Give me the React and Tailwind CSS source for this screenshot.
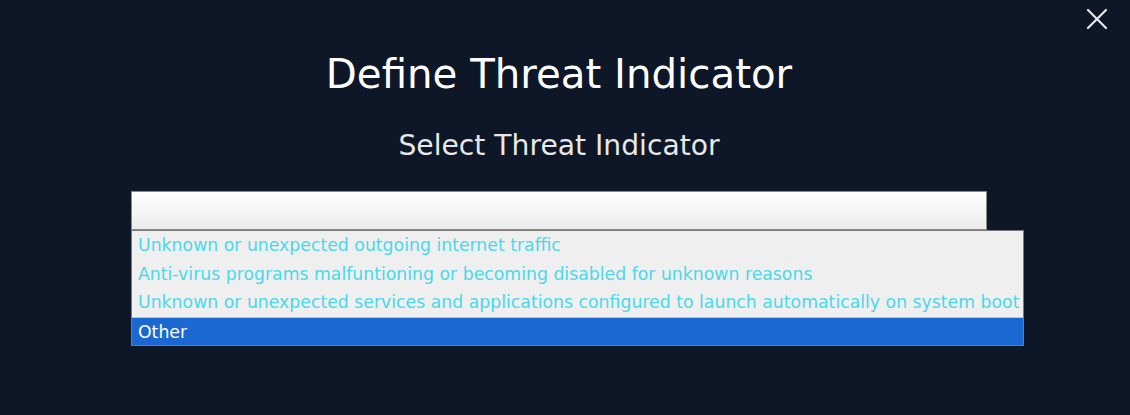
export default function App() {
  const items = [
    "Unknown or unexpected outgoing internet traffic",
    "Anti-virus programs malfuntioning or becoming disabled for unknown reasons",
    "Unknown or unexpected services and applications configured to launch automatically on system boot",
  ];
  return (
    <div className="relative w-[1130px] h-[415px] bg-[#0e1727] overflow-hidden" style={{ fontFamily: '"DejaVu Sans", sans-serif' }}>
      <button className="absolute right-[22px] top-[8px] w-[22px] h-[22px] text-[#e8e8e8]">
        <svg viewBox="0 0 22 22" width="22" height="22" stroke="currentColor" strokeWidth="2.2" strokeLinecap="round">
          <path d="M2 2L20 20M20 2L2 20" />
        </svg>
      </button>
      <div className="flex flex-col items-center pt-[50px] pr-[12px]">
        <h1 className="text-[40.3px] leading-[50px] text-white font-normal">Define Threat Indicator</h1>
        <h2 className="mt-[29px] text-[28.2px] leading-[34px] text-[#e8e8e8] font-normal">Select Threat Indicator</h2>
      </div>
      <div className="ml-[131px] mt-[28px] w-[893px]">
        <div className="w-[856px] h-[39px] border border-[#8a8a8a] bg-gradient-to-b from-white to-[#ececec]" />
        <div className="w-[893px] border border-[#7a7a7a] bg-[#efefef] text-[17.3px]">
          {items.map((t) => (
            <div key={t} className="h-[28.5px] leading-[28.5px] px-[6px] text-[#4ad8ea] whitespace-nowrap">{t}</div>
          ))}
          <div className="h-[28.5px] leading-[28.5px] px-[6px] bg-[#1b68d3] text-white border-t border-[#a8c8f0]">Other</div>
        </div>
      </div>
    </div>
  );
}
